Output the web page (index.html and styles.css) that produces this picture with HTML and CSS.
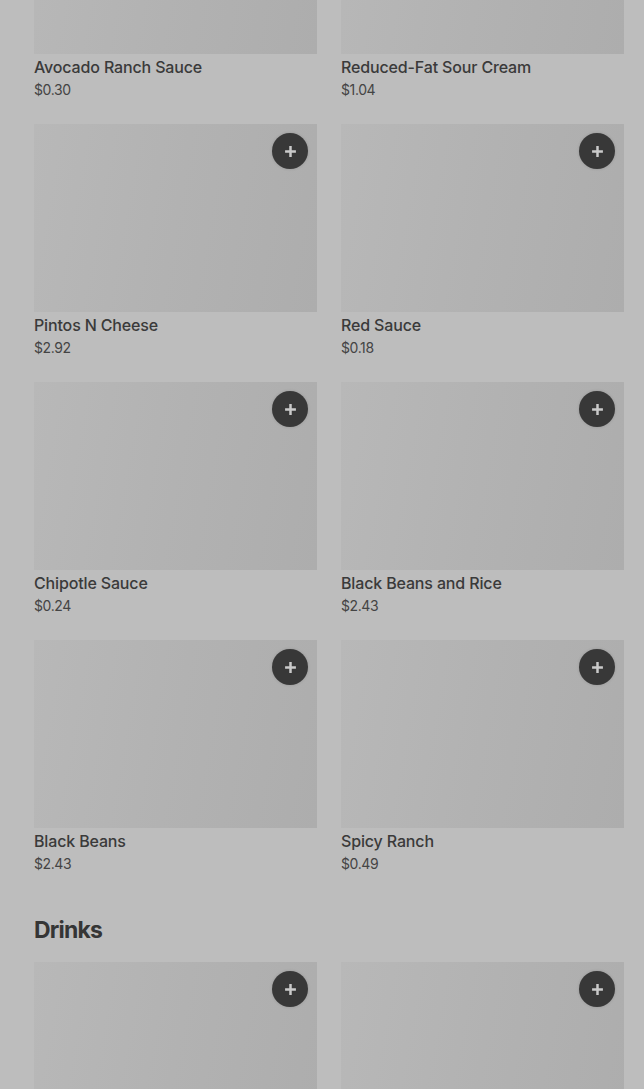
FILE: index.html
```html
<!DOCTYPE html>
<html lang="en">
<head>
    <meta charset="UTF-8">
    <meta name="viewport" content="width=device-width, initial-scale=1.0">
    <title>Menu - Sides and Drinks</title>
    <link rel="stylesheet" href="styles.css">
</head>
<body>
    <div class="overlay">
        <main class="menu">
            <!-- Sides -->
            <section class="menu-section sides">
                <div class="item-grid">
                    <div class="item">
                        <div class="item-image"><button class="add-btn"><svg viewBox="0 0 12 12"><path d="M6 1v10M1 6h10"/></svg></button></div>
                        <div class="item-name">Avocado Ranch Sauce</div>
                        <div class="item-price">$0.30</div>
                    </div>
                    <div class="item">
                        <div class="item-image"><button class="add-btn"><svg viewBox="0 0 12 12"><path d="M6 1v10M1 6h10"/></svg></button></div>
                        <div class="item-name">Reduced-Fat Sour Cream</div>
                        <div class="item-price">$1.04</div>
                    </div>
                    <div class="item">
                        <div class="item-image"><button class="add-btn"><svg viewBox="0 0 12 12"><path d="M6 1v10M1 6h10"/></svg></button></div>
                        <div class="item-name">Pintos N Cheese</div>
                        <div class="item-price">$2.92</div>
                    </div>
                    <div class="item">
                        <div class="item-image"><button class="add-btn"><svg viewBox="0 0 12 12"><path d="M6 1v10M1 6h10"/></svg></button></div>
                        <div class="item-name">Red Sauce</div>
                        <div class="item-price">$0.18</div>
                    </div>
                    <div class="item">
                        <div class="item-image"><button class="add-btn"><svg viewBox="0 0 12 12"><path d="M6 1v10M1 6h10"/></svg></button></div>
                        <div class="item-name">Chipotle Sauce</div>
                        <div class="item-price">$0.24</div>
                    </div>
                    <div class="item">
                        <div class="item-image"><button class="add-btn"><svg viewBox="0 0 12 12"><path d="M6 1v10M1 6h10"/></svg></button></div>
                        <div class="item-name">Black Beans and Rice</div>
                        <div class="item-price">$2.43</div>
                    </div>
                    <div class="item">
                        <div class="item-image"><button class="add-btn"><svg viewBox="0 0 12 12"><path d="M6 1v10M1 6h10"/></svg></button></div>
                        <div class="item-name">Black Beans</div>
                        <div class="item-price">$2.43</div>
                    </div>
                    <div class="item">
                        <div class="item-image"><button class="add-btn"><svg viewBox="0 0 12 12"><path d="M6 1v10M1 6h10"/></svg></button></div>
                        <div class="item-name">Spicy Ranch</div>
                        <div class="item-price">$0.49</div>
                    </div>
                </div>
            </section>

            <!-- Drinks -->
            <section class="menu-section">
                <h2 class="section-title">Drinks</h2>
                <div class="item-grid">
                    <div class="item">
                        <div class="item-image"><button class="add-btn"><svg viewBox="0 0 12 12"><path d="M6 1v10M1 6h10"/></svg></button></div>
                    </div>
                    <div class="item">
                        <div class="item-image"><button class="add-btn"><svg viewBox="0 0 12 12"><path d="M6 1v10M1 6h10"/></svg></button></div>
                    </div>
                </div>
            </section>
        </main>
    </div>
</body>
</html>
```

FILE: styles.css
```css
* {
    margin: 0;
    padding: 0;
    box-sizing: border-box;
}

body {
    background: #bdbdbd;
    font-family: 'Inter', 'Roboto', sans-serif;
    color: #383838;
    overflow: hidden;
    height: 1089px;
}

/* Page scrolled down, dimmed under a modal */
.menu {
    padding: 0 20px 0 34px;
    margin-top: -134px;
}

.item-grid {
    display: grid;
    grid-template-columns: 1fr 1fr;
    column-gap: 24px;
    row-gap: 24px;
}

.item-image {
    position: relative;
    height: 188px;
    background: linear-gradient(100deg, #b8b8b8 0%, #b2b2b2 50%, #adadad 100%);
}

.add-btn {
    position: absolute;
    top: 9px;
    right: 9px;
    width: 36px;
    height: 36px;
    border: none;
    border-radius: 50%;
    background: #383838;
    display: flex;
    align-items: center;
    justify-content: center;
    box-shadow: 0 0 3px rgba(0,0,0,0.15);
}

.add-btn svg {
    width: 13px;
    height: 13px;
    stroke: #cacaca;
    stroke-width: 2.3;
    fill: none;
}

.item-name {
    margin-top: 3px;
    font-size: 16px;
    font-weight: 500;
    line-height: 20px;
    letter-spacing: -0.15px;
    color: #3a3a3a;
}

.item-price {
    margin-top: 3px;
    font-size: 14px;
    line-height: 20px;
    color: #444;
    letter-spacing: -0.4px;
}

.section-title {
    margin: 40px 0 16px;
    font-size: 23px;
    font-weight: 700;
    line-height: 32px;
    letter-spacing: -0.8px;
    color: #353535;
}
```
